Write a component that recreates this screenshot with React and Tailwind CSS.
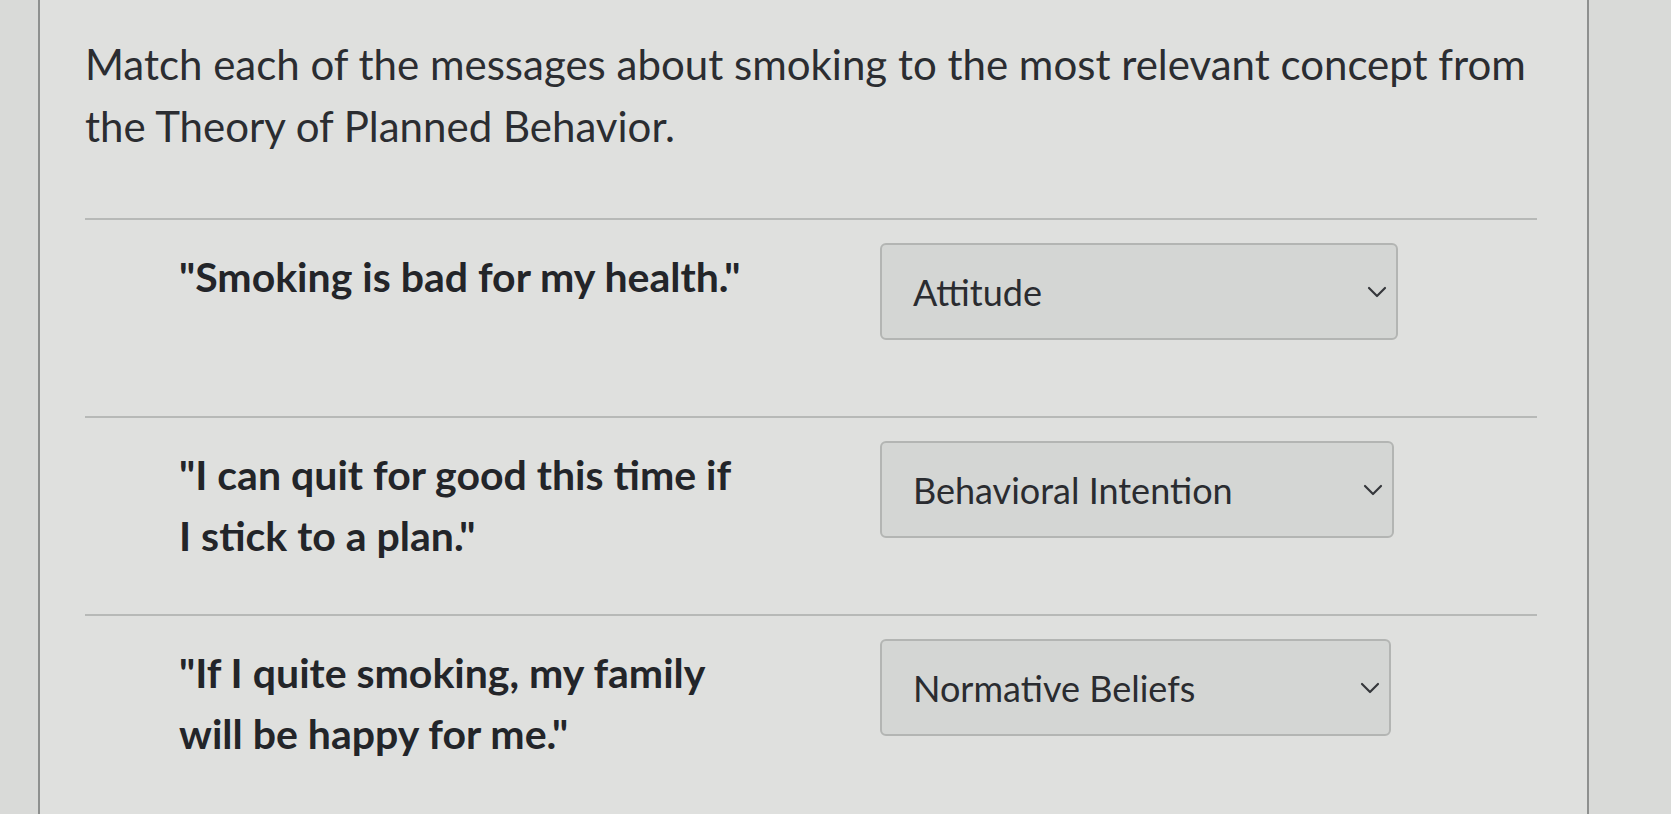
import { ChevronDown } from 'lucide-react'

const rows = [
  { message: '"Smoking is bad for my health."', answer: 'Attitude', width: 'w-[518px]' },
  { message: '"I can quit for good this time if I stick to a plan."', answer: 'Behavioral Intention', width: 'w-[514px]' },
  { message: '"If I quite smoking, my family will be happy for me."', answer: 'Normative Beliefs', width: 'w-[511px]' },
]

function AnswerSelect({ value, width }) {
  return (
    <div className={`flex h-[97px] ${width} items-center justify-between rounded-[6px] border-2 border-[#b3b5b3] bg-[#d4d6d4] pl-[31px] pr-[3px]`}>
      <span className="text-[36px] text-[#2a2c30]">{value}</span>
      <ChevronDown className="h-[32px] w-[32px] text-[#35373b]" strokeWidth={1.6} />
    </div>
  )
}

export default function App() {
  return (
    <div className="min-h-screen bg-[#d9dad8] font-['Lato','Noto_Sans',sans-serif]">
      <div className="ml-[38px] min-h-[814px] w-[1551px] border-x-2 border-[#8e908f] bg-[#dfe0de] pl-[45px] pr-[50px] pt-[33px]">
        <h1 className="text-[42px] leading-[62px] text-[#2b2d31]">
          Match each of the messages about smoking to the most relevant concept from the Theory of Planned Behavior.
        </h1>

        <div className="mt-[61px]">
          {rows.map((row) => (
            <div key={row.answer} className="flex h-[198px] border-t-2 border-[#b7b9b7] pt-[23px]">
              <p className="ml-[94px] mt-[3px] w-[562px] shrink-0 text-[41px] font-bold leading-[61px] text-[#232529]">
                {row.message}
              </p>
              <div className="ml-[139px]">
                <AnswerSelect value={row.answer} width={row.width} />
              </div>
            </div>
          ))}
        </div>
      </div>
    </div>
  )
}
